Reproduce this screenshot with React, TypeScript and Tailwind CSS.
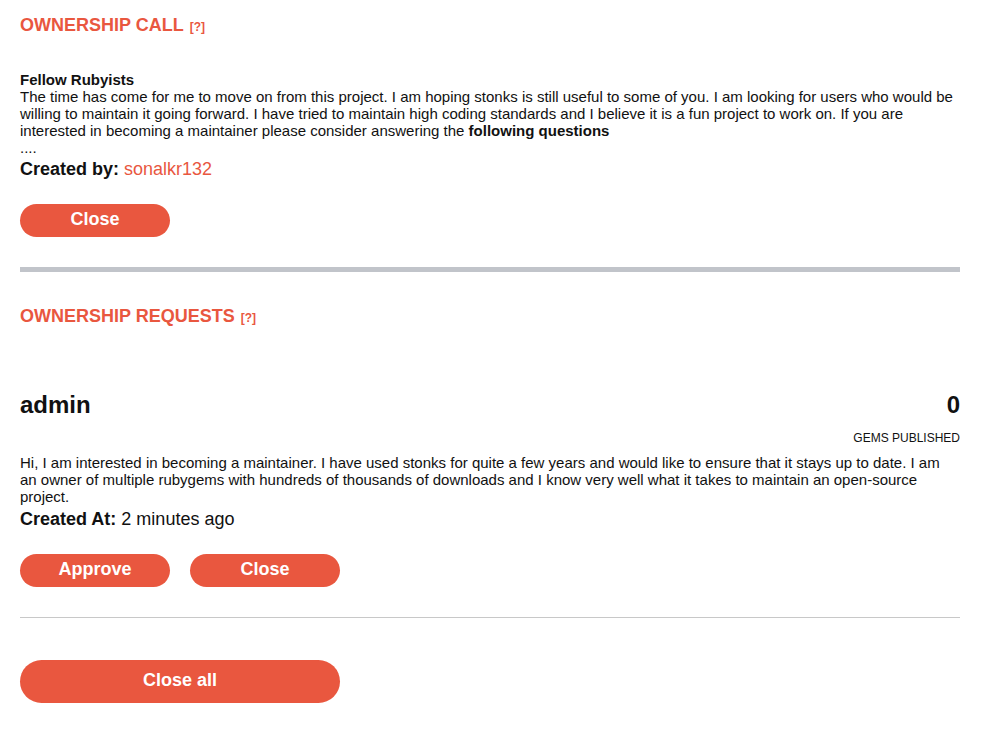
const orange = 'bg-[#e9573f]'

function Heading({ children }: { children: string }) {
  return (
    <h2 className="flex items-baseline gap-1.5 text-[18px] leading-[21px] font-bold text-[#e9573f]">
      {children}
      <span className="text-[12px] font-bold">[?]</span>
    </h2>
  )
}

function Btn({ label, wide }: { label: string; wide?: boolean }) {
  return (
    <button
      className={
        wide
          ? `${orange} h-[43px] w-[320px] rounded-full pb-[2px] text-[18px] font-bold text-white`
          : `${orange} h-[33px] w-[150px] rounded-full pb-[2px] text-[18px] font-bold text-white`
      }
    >
      {label}
    </button>
  )
}

export default function App() {
  return (
    <div className="min-h-screen bg-white font-['Liberation_Sans',Arial,sans-serif] text-[#111]">
      <div className="w-[940px] ml-5 pt-[15px]">
        <Heading>OWNERSHIP CALL</Heading>

        <div className="mt-[33px] text-[15px] leading-[17px]">
          <div className="font-bold">Fellow Rubyists</div>
          <p>
            The time has come for me to move on from this project. I am hoping stonks is still useful to some of you. I am looking for users who would be
            willing to maintain it going forward. I have tried to maintain high coding standards and I believe it is a fun project to work on. If you are
            interested in becoming a maintainer please consider answering the <b>following questions</b>
          </p>
          <p>....</p>
        </div>
        <div className="mt-[3px] text-[18px] leading-[21px]">
          <span className="font-bold">Created by:</span> <span className="text-[#e9573f]">sonalkr132</span>
        </div>

        <div className="mt-[24px]">
          <Btn label="Close" />
        </div>

        <div className="mt-[30px] h-[5px] bg-[#c1c4ca]" />

        <div className="mt-[34px]">
          <Heading>OWNERSHIP REQUESTS</Heading>
        </div>

        <div className="mt-[62px] flex items-start justify-between">
          <div className="text-[24px] leading-[28px] font-bold">admin</div>
          <div className="text-right">
            <div className="text-[24px] leading-[28px] font-bold">0</div>
            <div className="mt-[12px] text-[12px] leading-[14px] uppercase">Gems published</div>
          </div>
        </div>
        <p className="mt-[9px] text-[15px] leading-[17px]">
          Hi, I am interested in becoming a maintainer. I have used stonks for quite a few years and would like to ensure that it stays up to date. I am
          an owner of multiple rubygems with hundreds of thousands of downloads and I know very well what it takes to maintain an open-source
          project.
        </p>
        <div className="mt-[4px] text-[18px] leading-[21px]">
          <span className="font-bold">Created At:</span> 2 minutes ago
        </div>

        <div className="mt-[24px] flex gap-5">
          <Btn label="Approve" />
          <Btn label="Close" />
        </div>

        <div className="mt-[30px] h-px bg-[#c8c8c8]" />

        <div className="mt-[42px] pb-7">
          <Btn label="Close all" wide />
        </div>
      </div>
    </div>
  )
}
